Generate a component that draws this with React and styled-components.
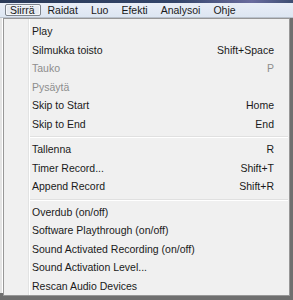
import styled, { createGlobalStyle } from "styled-components";

const GlobalStyle = createGlobalStyle`
  html, body {
    margin: 0;
    padding: 0;
    background: #6f6f6f;
  }
  * {
    box-sizing: border-box;
  }
`;

const menus = ["Siirrä", "Raidat", "Luo", "Efekti", "Analysoi", "Ohje"];

const sections = [
  [
    { label: "Play" },
    { label: "Silmukka toisto", key: "Shift+Space" },
    { label: "Tauko", key: "P", disabled: true },
    { label: "Pysäytä", disabled: true },
    { label: "Skip to Start", key: "Home" },
    { label: "Skip to End", key: "End" },
  ],
  [
    { label: "Tallenna", key: "R" },
    { label: "Timer Record...", key: "Shift+T" },
    { label: "Append Record", key: "Shift+R" },
  ],
  [
    { label: "Overdub (on/off)" },
    { label: "Software Playthrough (on/off)" },
    { label: "Sound Activated Recording (on/off)" },
    { label: "Sound Activation Level..." },
    { label: "Rescan Audio Devices" },
  ],
];

function App() {
  return (
    <>
      <GlobalStyle />
      <Screen>
        <TitleStrip />
        <MenuBar>
          {menus.map((m, i) => (
            <MenuTitle key={m} active={i === 0}>
              {m}
            </MenuTitle>
          ))}
        </MenuBar>
        <Workspace>
          <WindowEdge />
          <Popup>
            {sections.map((items, s) => (
              <Section key={s}>
                {s > 0 && <Separator />}
                {items.map((it) => (
                  <Item key={it.label} disabled={it.disabled}>
                    <span>{it.label}</span>
                    {it.key && <Shortcut>{it.key}</Shortcut>}
                  </Item>
                ))}
              </Section>
            ))}
          </Popup>
        </Workspace>
      </Screen>
    </>
  );
}

export default App;

const Screen = styled.div`
  width: 293px;
  height: 300px;
  overflow: hidden;
  display: flex;
  flex-direction: column;
  font-family: "Liberation Sans", Arial, sans-serif;
  font-size: 10.5px;
  color: #1a1a1a;
`;

const TitleStrip = styled.div`
  height: 3px;
  background: linear-gradient(
    90deg,
    #2a3a58 0%,
    #33456a 60%,
    #6a6c9e 86%,
    #3c4d72 100%
  );
`;

const MenuBar = styled.div`
  height: 15px;
  display: flex;
  align-items: stretch;
  padding: 1px 0 1px 5px;
  gap: 2px;
  background: linear-gradient(180deg, #e9eef7 0%, #dde6f2 100%);
  border-bottom: 1px solid #b9c1cc;
`;

const MenuTitle = styled.div`
  display: flex;
  align-items: center;
  padding: 0 5px 0 4px;
  border: 1px solid ${(p) => (p.active ? "#7d848d" : "transparent")};
  border-radius: 2px;
  background: ${(p) => (p.active ? "#e6eaf0" : "transparent")};
  box-shadow: ${(p) => (p.active ? "inset 0 0 0 1px #f6f8fb" : "none")};
`;

const Workspace = styled.div`
  flex: 1;
  position: relative;
  background: #6f6f6f;
`;

const WindowEdge = styled.div`
  width: 3px;
  height: 275px;
  background: #e4e4e4;
  border-right: 1px solid #ffffff;
`;

const Popup = styled.div`
  position: absolute;
  left: 3px;
  top: 0;
  width: 287px;
  height: 278px;
  padding-top: 3px;
  border: 1px solid #979797;
  background: linear-gradient(
    90deg,
    #f0f0f0 0,
    #f0f0f0 24px,
    #e2e3e3 24px,
    #e2e3e3 25px,
    #ffffff 25px,
    #ffffff 26px,
    #f0f0f0 26px
  );
`;

const Section = styled.div`
  display: flex;
  flex-direction: column;
`;

const Separator = styled.div`
  height: 7px;
  margin-left: 26px;
  margin-right: 1px;
  &::before {
    content: "";
    display: block;
    margin-top: 3px;
    height: 1px;
    background: #e0e0e0;
    border-bottom: 1px solid #ffffff;
    box-sizing: content-box;
  }
`;

const Item = styled.div`
  height: 18.5px;
  display: flex;
  align-items: center;
  justify-content: space-between;
  padding: 0 15px 0 28px;
  color: ${(p) => (p.disabled ? "#8d8d8d" : "#1a1a1a")};
  white-space: nowrap;
`;

const Shortcut = styled.span``;
